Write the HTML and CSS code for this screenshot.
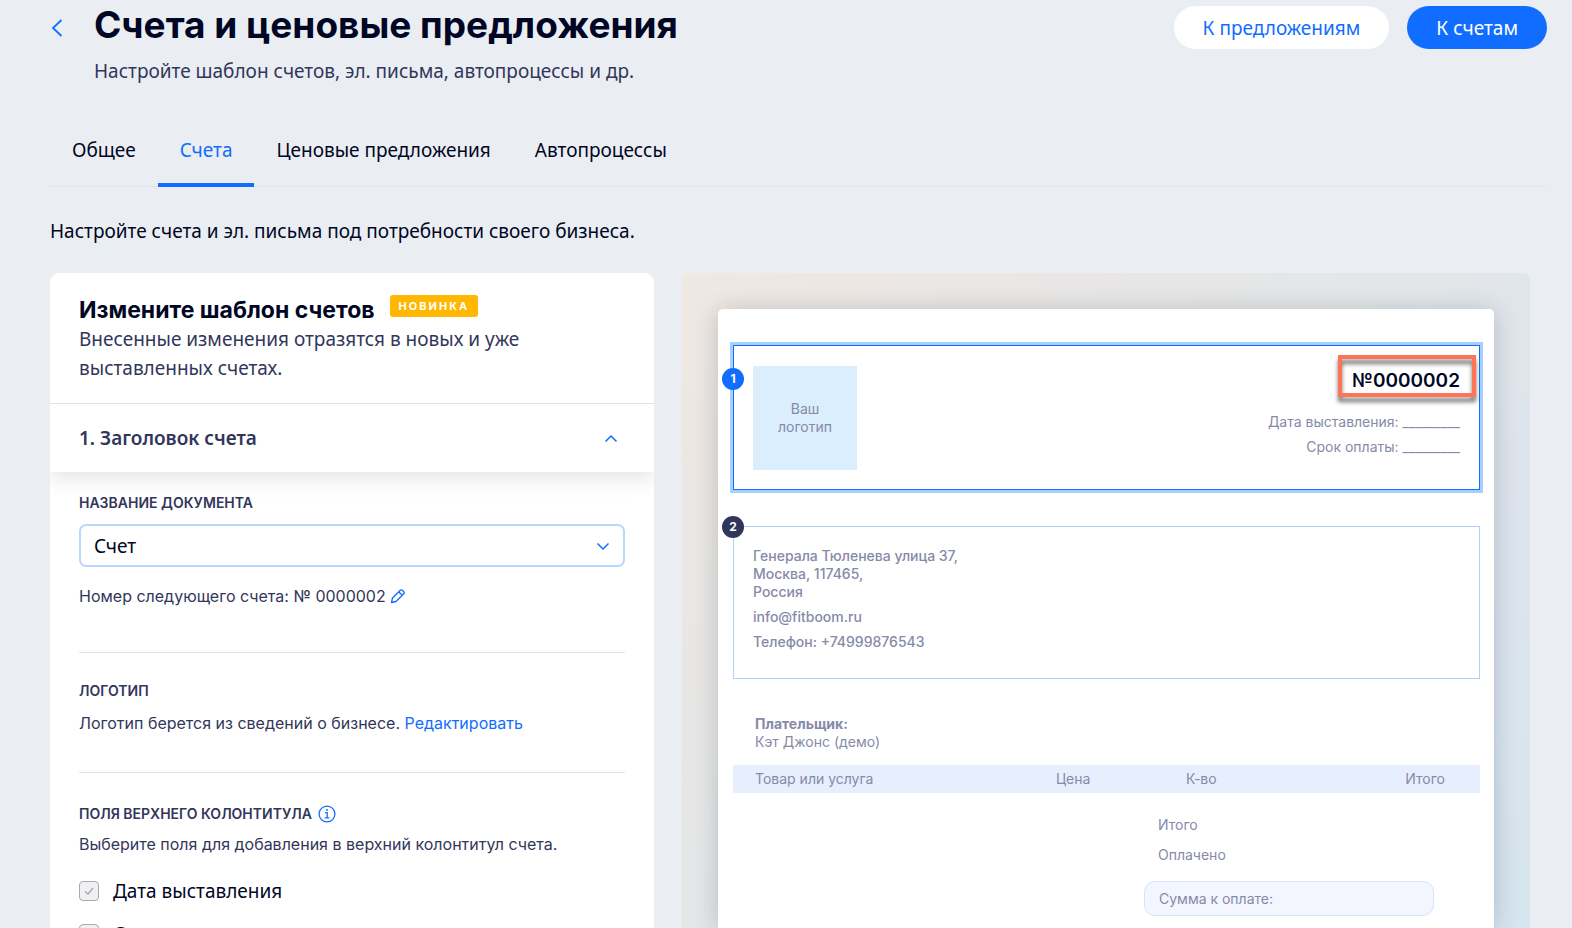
FILE: index.html
```html
<!DOCTYPE html>
<html lang="ru">
<head>
<meta charset="utf-8">
<title>Счета и ценовые предложения</title>
<link rel="stylesheet" href="styles.css">
</head>
<body>
<div class="page">
  <header class="header">
    <a class="back" href="#" aria-label="Назад">
      <svg width="12" height="18" viewBox="0 0 12 18" fill="none" stroke="currentColor" stroke-width="1.8"><path d="M10.500 1 2 9l8.500 8"/></svg>
    </a>
    <div class="heading">
      <h1 class="title">Счета и ценовые предложения</h1>
      <p class="subtitle">Настройте шаблон счетов, эл. письма, автопроцессы и др.</p>
    </div>
    <div class="actions">
      <button class="btn btn-light" type="button">К предложениям</button>
      <button class="btn btn-primary" type="button">К счетам</button>
    </div>
  </header>

  <nav class="tabs">
    <a class="tab" href="#">Общее</a>
    <a class="tab tab-active" href="#">Счета</a>
    <a class="tab" href="#">Ценовые предложения</a>
    <a class="tab" href="#">Автопроцессы</a>
  </nav>

  <p class="intro">Настройте счета и эл. письма под потребности своего бизнеса.</p>

  <main class="columns">
    <section class="card">
      <div class="card-head">
        <div class="card-title-row">
          <h2 class="card-title">Измените шаблон счетов</h2>
          <span class="new-badge">НОВИНКА</span>
        </div>
        <p class="card-desc">Внесенные изменения отразятся в новых и уже выставленных счетах.</p>
      </div>
      <button class="accordion" type="button" aria-expanded="true">
        <span>1. Заголовок счета</span>
        <svg width="14" height="9" viewBox="0 0 14 9" fill="none" stroke="#116dff" stroke-width="1.5"><path d="M1.500 7.500 7 2l5.500 5.500"/></svg>
      </button>
      <div class="card-body">
        <div class="group">
          <label class="label" for="docname">НАЗВАНИЕ ДОКУМЕНТА</label>
          <div class="select-wrap">
            <select class="select" id="docname"><option>Счет</option></select>
            <svg class="select-arrow" width="14" height="9" viewBox="0 0 14 9" fill="none" stroke="#116dff" stroke-width="1.5"><path d="M1.500 1.500 7 7l5.500-5.500"/></svg>
          </div>
          <p class="text number-row">Номер следующего счета: № 0000002
            <button class="icon-btn" type="button" aria-label="Изменить номер">
              <svg width="16" height="16" viewBox="0 0 16 16" fill="none" stroke="#116dff" stroke-width="1.3" stroke-linejoin="round"><path d="M1.500 14.500 2.500 10 10.300 2.200a1.400 1.400 0 0 1 2 0l1.500 1.500a1.400 1.400 0 0 1 0 2L6 13.500ZM8.700 3.800l3.500 3.500"/></svg>
            </button>
          </p>
        </div>
        <div class="group group-logo">
          <h3 class="label">ЛОГОТИП</h3>
          <p class="text">Логотип берется из сведений о бизнесе. <a class="link" href="#">Редактировать</a></p>
        </div>
        <div class="group group-fields">
          <h3 class="label label-info">ПОЛЯ ВЕРХНЕГО КОЛОНТИТУЛА
            <svg width="18" height="18" viewBox="0 0 18 18" fill="none" stroke="#116dff" stroke-width="1.3"><circle cx="9" cy="9" r="7.900"/><path d="M7 7.600h2.200v5.200M6.800 12.900h4.600"/><path d="M8.200 4.800h1.600" stroke-width="1.700"/></svg>
          </h3>
          <p class="text">Выберите поля для добавления в верхний колонтитул счета.</p>
          <label class="check-row"><input class="check" type="checkbox" checked disabled>Дата выставления</label>
          <label class="check-row"><input class="check" type="checkbox" checked disabled>Срок оплаты</label>
        </div>
      </div>
    </section>

    <section class="preview">
      <div class="paper">
        <div class="box box-active">
          <span class="step step-active">1</span>
          <div class="logo">Ваш<br>логотип</div>
          <div class="meta">
            <strong class="number">№0000002</strong>
            <p>Дата выставления: _________</p>
            <p>Срок оплаты: _________</p>
          </div>
        </div>
        <div class="box box-address">
          <span class="step">2</span>
          <p>Генерала Тюленева улица 37,<br>Москва, 117465,<br>Россия</p>
          <p>info@fitboom.ru</p>
          <p>Телефон: +74999876543</p>
        </div>
        <div class="payer">
          <strong>Плательщик:</strong>
          <p>Кэт Джонс (демо)</p>
        </div>
        <table class="items">
          <thead><tr><th class="col-name">Товар или услуга</th><th class="col-price">Цена</th><th class="col-qty">К-во</th><th class="col-total">Итого</th></tr></thead>
        </table>
        <div class="totals">
          <p>Итого</p>
          <p>Оплачено</p>
          <p class="due">Сумма к оплате:</p>
        </div>
      </div>
    </section>
  </main>
</div>
</body>
</html>
```
FILE: styles.css
```css
*, *::after { box-sizing: border-box; }
body {
  margin: 0;
  background: #eaeef3;
  color: #000624;
  font-family: "Noto Sans", "Open Sans", sans-serif;
  font-size: 19px;
}
h1, h2, h3, p { margin: 0; }
a { text-decoration: none; color: inherit; }
button, select { font: inherit; }
.page {
  display: flex;
  flex-direction: column;
  height: 100vh;
  overflow: hidden;
  padding: 0 25px 0 50px;
}
.header { display: flex; align-items: flex-start; flex-shrink: 0; }
.back { width: 44px; padding: 19px 0 0 1px; color: #116dff; line-height: 0; }
.heading { flex: 1; }
.title { font-family: Inter, sans-serif; font-size: 37px; line-height: 50px; font-weight: 700; }
.subtitle { line-height: 24px; margin-top: 9px; color: #32365b; }
.actions { display: flex; gap: 18px; padding-top: 6px; }
.btn { height: 43px; padding: 0 29px; border: 0; border-radius: 22px; }
.btn-light { background: #fff; color: #116dff; }
.btn-primary { background: #116dff; color: #fff; }

.tabs { display: flex; flex-shrink: 0; margin-top: 37px; border-bottom: 1px solid #dfe5eb; }
.tab { padding: 18px 22px 21px; line-height: 24px; margin-bottom: -1px; border-bottom: 4px solid transparent; }
.tab-active { color: #116dff; border-color: #116dff; }

.intro { flex-shrink: 0; margin-top: 32px; line-height: 24px; }

.columns {
  display: grid;
  grid-template-columns: 604fr 848fr;
  gap: 28px;
  flex: 1;
  min-height: 0;
  margin: 30px 17px 0 0;
}
.card { background: #fff; border-radius: 10px 10px 0 0; overflow: hidden; }
.card-head {
  position: relative; z-index: 1;
  padding: 22px 100px 20px 29px;
  border-bottom: 1px solid #dfe5eb;
  background: #fff;
}
.card-title-row { display: flex; gap: 15px; }
.card-title { font-family: Inter, sans-serif; font-size: 23px; line-height: 30px; font-weight: 700; }
.new-badge {
  height: 22px; padding: 0 9px; border-radius: 3px;
  background: #ffb700; color: #fff;
  font-family: Inter, sans-serif; font-size: 11px; line-height: 22px; font-weight: 700; letter-spacing: 2px;
}
.card-desc { line-height: 29px; color: #32365b; }
.accordion {
  display: flex; justify-content: space-between; align-items: center;
  position: relative;
  width: 100%; height: 68px; padding: 0 36px 0 29px;
  border: 0; background: #fff; color: #32365b;
  font-weight: 600;
  box-shadow: 0 2px 24px rgba(22, 45, 61, .18);
}
.card-body { padding: 0 29px; }
.group { padding-bottom: 44px; border-bottom: 1px solid #dfe5eb; }
.label { display: block; font-family: Inter, sans-serif; font-size: 14px; line-height: 20px; font-weight: 600; color: #32365b; }
.group:first-child { padding-top: 21px; }
.select-wrap { position: relative; margin-top: 11px; }
.select {
  display: block; width: 100%; height: 43px; padding: 0 13px;
  appearance: none; border: 2px solid #bcd7ff; border-radius: 7px;
  background: #fff; color: #000624;
}
.select-arrow { position: absolute; right: 15px; top: 18px; pointer-events: none; }
.text { font-family: Inter, sans-serif; font-size: 16px; line-height: 24px; color: #32365b; }
.number-row { margin-top: 17px; }
.icon-btn { padding: 0; border: 0; background: none; line-height: 0; vertical-align: -2px; }
.link { color: #116dff; }
.group-logo { padding: 28px 0 37px; }
.group-logo .text { margin-top: 10px; }
.group-fields { padding-top: 31px; border: 0; }
.label-info { display: flex; gap: 6px; align-items: center; }
.label-info + .text { margin-top: 8px; }
.check-row { display: flex; align-items: center; gap: 14px; height: 24px; margin: 23px 0 0; }
.check-row + .check-row { margin-top: 19px; }
.check {
  appearance: none; width: 20px; height: 20px; margin: 0;
  border: 1px solid #a8a9b5; border-radius: 4px;
  background: #f0f0f2 url("data:image/svg+xml,%3Csvg xmlns='http://www.w3.org/2000/svg' viewBox='0 0 18 18' fill='none' stroke='%23a8a9b5' stroke-width='1.500'%3E%3Cpath d='M5 9.500 8 12l5-6'/%3E%3C/svg%3E") center / 18px no-repeat;
}

.preview {
  padding: 36px 36px 0;
  border-radius: 6px 6px 0 0;
  background: linear-gradient(135deg, #f0e8e2 0%, #e6e6e6 35%, #e2e6e9 52%, #dde4ed 72%, #d6e5ef 100%);
  overflow: hidden;
}
.paper {
  height: 100%;
  padding: 36px 14px 0 15px;
  border-radius: 5px 5px 0 0;
  background: #fff;
  color: #868aa8;
  font-family: Inter, sans-serif; font-size: 14px; line-height: 18px;
  box-shadow: 0 2px 24px rgba(22, 45, 61, .22);
}
.box { position: relative; border: 1px solid #b1d2ff; }
.box-active {
  display: flex; justify-content: space-between; align-items: flex-start;
  height: 145px; padding: 20px 19px;
  border-color: #116dff;
  box-shadow: 0 0 0 3px #a6d0ff;
}
.step {
  position: absolute; left: -12px; top: -11px;
  width: 22px; height: 22px; border-radius: 50%;
  background: #32365b; color: #fff;
  font-size: 12px; line-height: 22px; font-weight: 700; text-align: center;
}
.step-active { top: 22px; background: #116dff; }
.logo {
  display: flex; align-items: center; justify-content: center;
  width: 104px; height: 104px; background: #daeefe; text-align: center;
}
.meta { text-align: right; }
.number {
  display: block; position: relative;
  color: #000624; font-size: 19px; line-height: 30px; font-weight: 600;
}
/* Highlight frame drawn over the invoice number */
.number::after {
  content: "";
  position: absolute; top: -11px; right: -16px;
  width: 138px; height: 42px;
  border: 4px solid #ff7357;
  filter: drop-shadow(0 5px 2px rgba(0, 0, 0, .55));
}
.meta p { margin-top: 7px; }
.meta .number + p { margin-top: 17px; }
.box-address { height: 153px; margin-top: 36px; padding: 20px 19px 0; font-weight: 500; }
.box-address p + p { margin-top: 7px; }
.payer { padding: 36px 22px 14px; }
.items { width: 100%; border-collapse: collapse; background: #e7efff; table-layout: fixed; }
.items th { height: 28px; padding: 0; font-weight: 400; text-align: left; }
.items .col-name { padding-left: 22px; }
.col-price { width: 130px; }
.col-qty, .col-total { width: 147px; }
.items .col-total { padding-right: 35px; text-align: right; }
.totals { width: 290px; margin: 23px 46px 0 auto; }
.totals p { margin: 0 0 12px 14px; }
.totals .due {
  height: 35px; margin: 17px 0 0; padding-left: 14px;
  border: 1px solid #d5e4ff; border-radius: 11px; background: #f3f6ff; line-height: 33px;
}
```
